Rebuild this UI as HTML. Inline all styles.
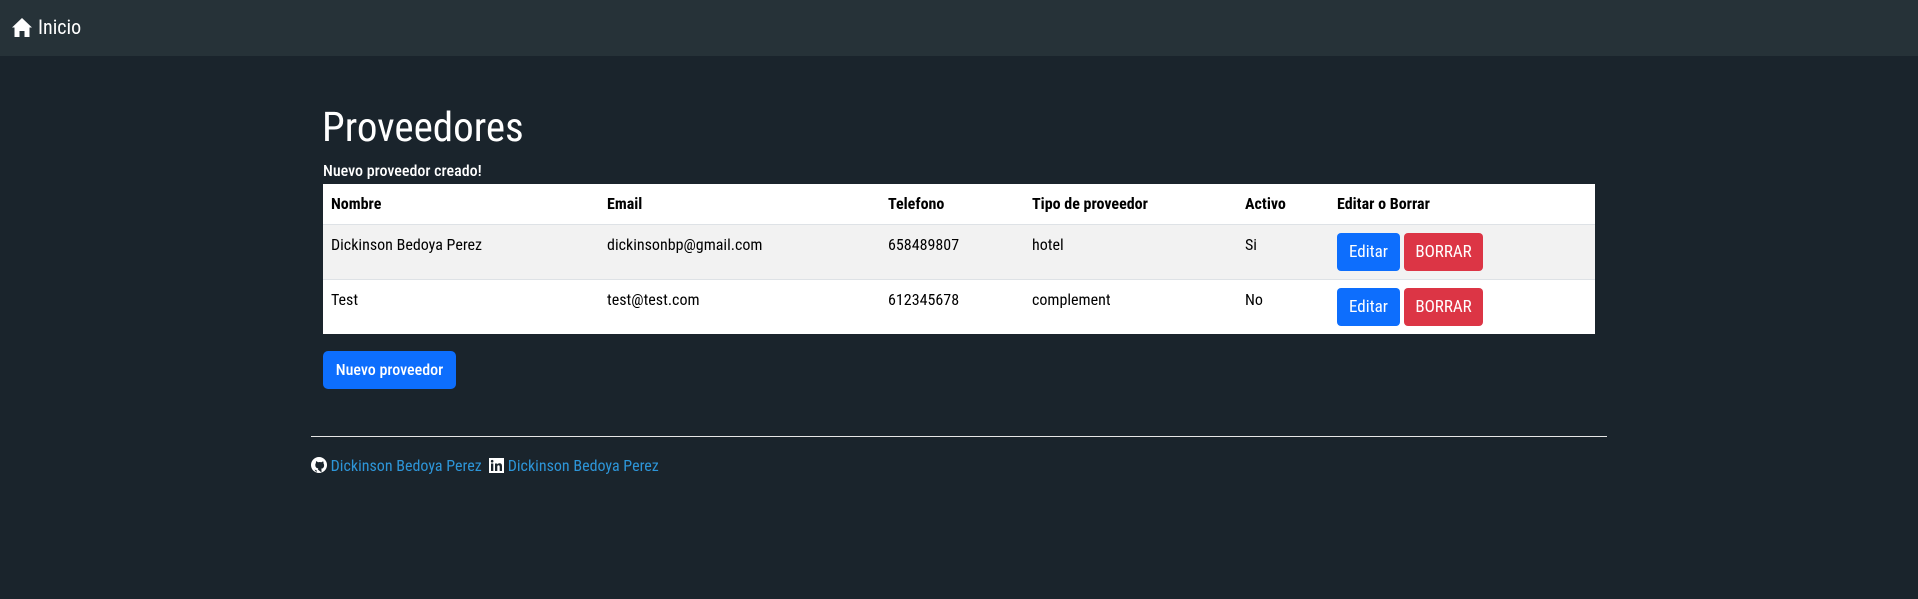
<!DOCTYPE html>
<html><head><meta charset="utf-8"><style>
*{box-sizing:border-box;margin:0;padding:0}
body{width:1918px;height:599px;background:#1a242c;font-family:"Roboto Condensed","Liberation Sans Narrow","Liberation Sans",sans-serif;color:#fff;position:relative;overflow:hidden}
.nav{position:absolute;left:0;top:0;width:1918px;height:56px;background:#263238}
.nav svg{position:absolute;left:11px;top:17px}
.nav span{position:absolute;left:38px;top:15px;font-size:20px;line-height:24px}
h1{position:absolute;left:322px;top:104px;font-size:41px;font-weight:400;line-height:48px}
.msg{position:absolute;left:323px;top:161px;font-size:16px;font-weight:500;line-height:20px}
table{position:absolute;left:323px;top:184px;width:1272px;border-collapse:collapse;background:#fff;color:#000;font-size:16px}
td,th{padding:0 0 0 8px;text-align:left;vertical-align:top;border-bottom:1px solid #dee2e6}
th{height:40px;font-weight:bold;font-size:16px;padding-top:10px}
tr.r td{height:55px;padding-top:10px}
tr.s td{background:#f2f2f2}
tr:last-child td{border-bottom:none}
.b{display:inline-block;color:#fff;border-radius:4px;height:38px;line-height:38px;text-align:center;font-size:17px;vertical-align:top}
.e{background:#0d6efd;width:63px}
.d{background:#dc3545;width:79px;margin-left:4px}
tr.r td.btn{padding-top:8px}
.np{position:absolute;left:323px;top:351px;width:133px;height:38px;line-height:38px;background:#0d6efd;border-radius:5px;text-align:center;font-size:16px;font-weight:500;color:#fff}
hr{position:absolute;left:311px;top:436px;width:1296px;border:0;border-top:1px solid #e6e6e6}
.ft{position:absolute;left:311px;top:455px;font-size:16px;line-height:22px;color:#2d95d8;white-space:nowrap}
.ft svg{vertical-align:-2px}
</style></head><body>
<div class="nav"><svg width="22" height="21" viewBox="0 0 22 21"><path d="M11 1 L1 10.5 L3.5 10.5 L3.5 20 L8.5 20 L8.5 14 L13.5 14 L13.5 20 L18.5 20 L18.5 10.5 L21 10.5 Z" fill="#fff"/></svg><span>Inicio</span></div>
<h1>Proveedores</h1>
<div class="msg">Nuevo proveedor creado!</div>
<table>
<colgroup><col style="width:276px"><col style="width:281px"><col style="width:144px"><col style="width:213px"><col style="width:92px"><col></colgroup>
<tr><th>Nombre</th><th>Email</th><th>Telefono</th><th>Tipo de proveedor</th><th>Activo</th><th>Editar o Borrar</th></tr>
<tr class="r s"><td>Dickinson Bedoya Perez</td><td>dickinsonbp@gmail.com</td><td>658489807</td><td>hotel</td><td>Si</td><td class="btn"><span class="b e">Editar</span><span class="b d">BORRAR</span></td></tr>
<tr class="r"><td>Test</td><td>test@test.com</td><td>612345678</td><td>complement</td><td>No</td><td class="btn"><span class="b e">Editar</span><span class="b d">BORRAR</span></td></tr>
</table>
<div class="np">Nuevo proveedor</div>
<hr>
<div class="ft"><svg width="16" height="16" viewBox="0 0 16 16"><circle cx="8" cy="8" r="8" fill="#fff"/><path d="M5.5 15.5v-2.5c-1.8.3-2.3-.9-2.5-1.3M10.5 15.5v-2.5c0-.6-.1-1-.4-1.3 1.6-.2 3-1 3-3.5 0-.8-.3-1.4-.7-1.9.1-.4.2-1.1-.1-1.8 0 0-.6-.2-1.9.7a6.5 6.5 0 0 0-3.4 0C5.7 4 5.1 4.2 5.1 4.2c-.3.7-.2 1.4-.1 1.8-.5.5-.7 1.1-.7 1.9 0 2.5 1.4 3.3 3 3.5-.2.3-.4.6-.4 1.1" fill="#1a242c"/></svg> Dickinson Bedoya Perez &nbsp;<svg width="15" height="15" viewBox="0 0 15 15"><rect width="15" height="15" fill="#fff"/><rect x="2" y="5.5" width="2.3" height="7.5" fill="#1a242c"/><circle cx="3.15" cy="3.2" r="1.3" fill="#1a242c"/><path d="M6 5.5h2.2v1c.4-.7 1.2-1.2 2.3-1.2 2 0 2.5 1.3 2.5 3V13h-2.3V8.8c0-.9-.2-1.6-1.1-1.6-1 0-1.3.7-1.3 1.6V13H6z" fill="#1a242c"/></svg> Dickinson Bedoya Perez</div>
</body></html>
